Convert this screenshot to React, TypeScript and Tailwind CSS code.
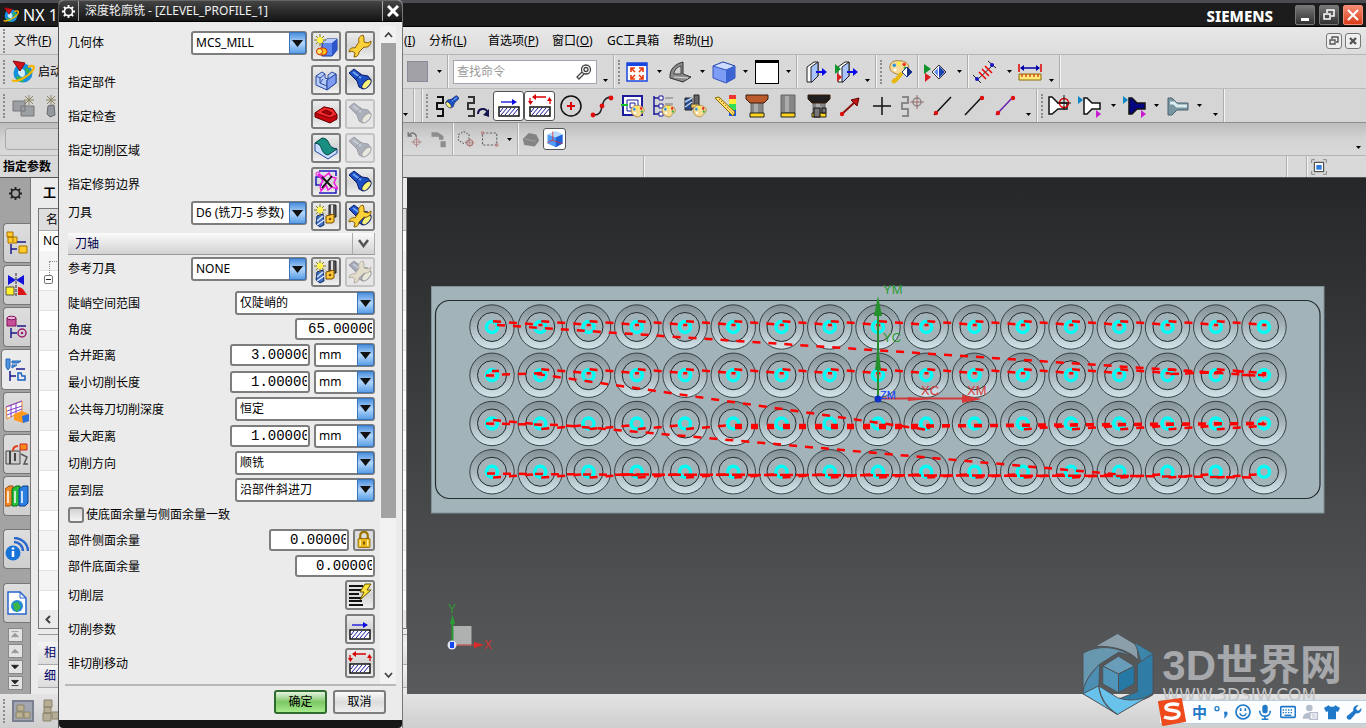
import type { ReactNode } from "react";

type Kids = { children?: ReactNode };

/* ---------- icon primitives ---------- */

function Ico({ children, s = 24 }: Kids & { s?: number }) {
  return (
    <svg width={s} height={s} viewBox="0 0 24 24" fill="none" aria-hidden="true" className="shrink-0">
      {children}
    </svg>
  );
}

const TorchShape = () => (
  <g>
    <path d="M1 5l5-4 8 6 6 1 3 4-8 9-4-2-2-6z" fill="#1c4fc4" stroke="#0a1d66" strokeLinejoin="round" />
    <path d="M5 4l8 6" stroke="#6ea4f5" strokeWidth="2" />
    <path d="M8 11l5-5" stroke="#0a1d66" />
    <ellipse cx="18.500" cy="16" rx="3" ry="6" transform="rotate(42 18.500 16)" fill="#f7f07a" stroke="#0a1d66" />
  </g>
);
const Torch = ({ off }: { off?: boolean }) => (
  <Ico>
    <g opacity={off ? 0.35 : 1} style={off ? { filter: "saturate(.25)" } : undefined}>
      <TorchShape />
    </g>
  </Ico>
);

const WrenchShape = () => (
  <path
    d="M15 1c-4 1-5 4-4 7l-4 6c-3-1-6 1-6 4l3-1 3 2-1 4c3 0 5-2 5-5l5-5c4 1 7-2 7-6l-3 2-4-1 0-4z"
    fill="#fbd23c"
    stroke="#8a5c00"
    strokeLinejoin="round"
  />
);
const SunShape = ({ x = 6, y = 6 }: { x?: number; y?: number }) => (
  <g transform={`translate(${x} ${y})`}>
    <path d="M0-6v12M-6 0h12M-4-4l8 8M4-4l-8 8" stroke="#8f7b00" strokeWidth="1" />
    <circle r="3" fill="#fff44a" />
  </g>
);
const NewGeometry = () => (
  <Ico>
    <path d="M8 9l5-4h10v11l-5 6H8z" fill="#5d87ee" stroke="#17319c" />
    <path d="M8 9l5-4h10l-5 4z" fill="#b9ceff" />
    <path d="M18 9v13l5-6V5z" fill="#2c55c9" />
    <SunShape />
    <rect x="3" y="14" width="10" height="7" rx="3.5" fill="#ffc21a" stroke="#d02c00" />
    <circle cx="5.5" cy="17.5" r="3" fill="#ffe870" stroke="#d02c00" />
  </Ico>
);
const NewTool = () => (
  <Ico>
    <path d="M3 12l6-2 1 11-4 2-4-3z" fill="#3f6fc0" stroke="#142c66" />
    <path d="M3 17l6-5M3 21l7-5" stroke="#dce9ff" strokeWidth="1.500" />
    <path d="M15 1h7v12h-7z" fill="#555" stroke="#222" />
    <path d="M18 1v12" stroke="#ddd" strokeWidth="2" />
    <path d="M12 12l8-2v8l-2 1h-6z" fill="#ffc83a" stroke="#7a4a00" />
    <circle cx="16" cy="15" r="1.300" fill="#7a4a00" />
    <SunShape />
  </Ico>
);
const ToolEdit = ({ off }: { off?: boolean }) => (
  <Ico>
    <g opacity={off ? 0.4 : 1} style={off ? { filter: "saturate(.3)" } : undefined}>
      <TorchShape />
      <WrenchShape />
    </g>
  </Ico>
);
const PartIcon = () => (
  <Ico>
    <path d="M2 8l6-4 3 2v4l3 1V7l4-3 4 2v9l-9 7-11-5z" fill="#b9cbfb" stroke="#2a4a9f" strokeLinejoin="round" />
    <path d="M2 8l4 2 5-4M6 10v5l7 3v-6l9-6M13 18v4M9 11l-3 4" stroke="#2a4a9f" />
    <path d="M13 12l9-6v9l-9 7z" fill="#7f9df0" stroke="#2a4a9f" />
  </Ico>
);
const CheckIcon = () => (
  <Ico>
    <path d="M1 11l9-6 9 2 4 6v4l-7 4L1 15z" fill="#c5060e" stroke="#5c0004" />
    <path d="M1 11l9-6 9 2 4 6-7 3z" fill="#ee2b2b" stroke="#7b0006" />
    <path d="M8 10l4-2 6 3-2 2z" fill="#a60009" stroke="#7b0006" />
  </Ico>
);
const AreaIcon = () => (
  <Ico>
    <path d="M1 7v8l13 8 9-6v-4z" fill="#c8dcff" stroke="#2a4a9f" />
    <path d="M1 7l7-5c9 0 5 11 15 11l-9 6C6 18 9 7 1 7z" fill="#188f80" stroke="#064b43" />
  </Ico>
);
const TrimIcon = () => (
  <Ico>
    <path d="M5 1h17v5M5 23h17v-5M9 7H2v8h6" stroke="#1b1bbd" strokeWidth="1.500" />
    <path d="M4 4l6 3 5-4 2 4 5 1-2 5 4 6-6-2-4 3-2-5-5 6-1-6 3-4z" stroke="#f01ce0" strokeWidth="1.500" />
    <circle cx="4" cy="4" r="2" stroke="#f01ce0" />
    <path d="M8 7l10 10M18 6L8 18" stroke="#111" strokeWidth="1.800" />
  </Ico>
);
const LayersIcon = () => (
  <Ico>
    <path d="M1 3h14M1 7h12M1 11h10M1 15h13M1 18h13M1 22h14" stroke="#111" strokeWidth="2" />
    <path d="M17 1h6l-4 6h4L12 17l4-8h-4z" fill="#ffe23a" stroke="#6b5500" />
  </Ico>
);
const HatchShape = () => (
  <g>
    <path d="M2 13h20v9H2z" fill="#fff" stroke="#111" strokeWidth="1.5" />
    <path d="M4 21l6-7M8 21l6-7M12 21l6-7M16 21l5-6M3 18l3-4" stroke="#1b1b9c" />
  </g>
);
const CutParam = () => (
  <Ico>
    <path d="M4 8h14" stroke="#0a0ae0" strokeWidth="1.3" />
    <path d="M15 5l5 3-5 3z" fill="#0a0ae0" />
    <HatchShape />
  </Ico>
);
const NonCut = () => (
  <Ico>
    <path d="M5 3h13M2 4v5M22 10V5" stroke="#d80000" strokeWidth="1.3" />
    <path d="M8 0v6L4 3zM0 7h5l-2.500 4zM19 7h5l-2.500-4z" fill="#d80000" />
    <HatchShape />
  </Ico>
);
const Lock = () => (
  <Ico s={18}>
    <path d="M7 11V6a5 5 0 0110 0v5" stroke="#9c7400" strokeWidth="3" />
    <rect x="4" y="10" width="16" height="12" rx="1" fill="#e9b31c" stroke="#7e5b00" />
    <path d="M7 12v8M17 12v8" stroke="#fff09b" strokeWidth="2" />
    <path d="M12 14v4" stroke="#5c4200" strokeWidth="2" />
  </Ico>
);
const PaletteShape = ({ t = "" }: { t?: string }) => (
  <g transform={t}>
    <path d="M2 9c0-5 5-8 11-7 6 0 10 3 10 7 0 3-4 3-5 5s-3 4-7 3-9-3-9-8z" fill="#f8dc96" stroke="#a0752c" />
    <circle cx="7" cy="7" r="1.900" fill="#2693e6" />
    <circle cx="12" cy="5" r="1.900" fill="#fff12b" />
    <circle cx="18" cy="6" r="1.900" fill="#e82c23" />
    <circle cx="19" cy="10" r="1.700" fill="#32b13c" />
    <circle cx="8" cy="12" r="1.700" fill="#fff" />
  </g>
);
const smallPalette = "translate(9 10) scale(.62 .75)";
const Globe = ({ s = 24 }: { s?: number }) => (
  <Ico s={s}>
    <circle cx="12" cy="13" r="9.500" fill="#1490e0" />
    <path d="M5 17c3-2 6 1 8 5-4 0-7-2-8-5zM14 8c4 0 6 3 6 6-4 0-6-3-6-6z" fill="#35b34b" />
    <path d="M8 10c3-2 6-1 6 3s-3 5-5 3-3-4-1-6z" fill="#cceefc" />
    <path d="M1 20c5 4 22-7 22-13-1-2-4-1-6 0" stroke="#f4b600" strokeWidth="2.200" />
    <path d="M2 1l12 2-5 8z" fill="#d6121b" stroke="#880a10" />
  </Ico>
);
const Cube = ({ s = 24 }: { s?: number }) => (
  <Ico s={s}>
    <path d="M1 6l10-4 12 4v12l-9 5-13-5z" fill="#7d9cf5" stroke="#3655b8" />
    <path d="M1 6l10-4 12 4-9 4z" fill="#cddbff" stroke="#3655b8" />
    <path d="M14 10l9-4v12l-9 5z" fill="#3c63d2" />
  </Ico>
);
const Book = ({ tri }: { tri?: boolean }) => (
  <Ico>
    <path d="M3 7l7-5h4v14l-6 6H3z" fill="#fff" stroke="#222" />
    <path d="M7 7l7-5v14l-6 6H7z" fill="#a9c4ff" stroke="#222" />
    <path d="M12 12h8" stroke="#0a0ae8" strokeWidth="2" />
    <path d="M18 8l5 4-5 4z" fill="#0a0ae8" />
    {tri && <path d="M0 4l6 5-6 5z" fill="#12952f" />}
    {tri && <path d="M2 13l5 4-5 5z" fill="#d81e1e" />}
  </Ico>
);
const Coil = () => <path d="M2 3h6v6H2v6h6v7H2" strokeWidth="2" />;
const ToolHead = ({ top, mid }: { top?: string; mid?: boolean }) => (
  <Ico>
    <path d={top ? "M6 6h12v14H6z" : "M5 1h14v18H5z"} fill="#868686" stroke="#666" />
    <path d={top ? "M11 9v10" : "M11 2v16"} stroke="#ababab" strokeWidth="4" />
    {top && <path d="M1 1h22v4l-4 4H5L1 5z" fill={top} stroke="#3a1c0a" />}
    <path d="M5 19h14v4H5z" fill="#ffd51c" stroke="#222" />
    {mid && <path d="M7 14h6v9H7zM15 14h4v5h-4z" fill="#777" stroke="#111" />}
  </Ico>
);
const Pin = ({ a, b, c = "#111" }: { a?: boolean; b?: boolean; c?: string }) => (
  <Ico>
    <path d="M3 21L20 3" stroke={c} strokeWidth="1.500" />
    {a && <circle cx="5" cy="19" r="2.200" fill="#e00d0d" />}
    {b && <circle cx="20" cy="4" r="2.200" fill="#e00d0d" />}
  </Ico>
);
const Funnel = ({ fill, steel, marks }: { fill: string; steel?: boolean; marks?: boolean }) => (
  <Ico>
    {steel ? (
      <g>
        <path d="M2 4h4l5 5h11v7H11l-5 5H2z" fill="#7896a2" stroke="#4d6570" />
        <path d="M4 9h4l3 3h10" stroke="#dcecf1" strokeWidth="3" />
      </g>
    ) : (
      <path d="M6 4h3l5 5h8v6h-8l-5 5H6z" fill={fill} stroke="#111" strokeWidth="1.500" />
    )}
    {marks && <path d="M0 2l5 4-5 4z" fill="#0c86c4" />}
    {marks && <path d="M18 16l5 4-5 4z" fill="#c81ed0" />}
  </Ico>
);

function Gear({ s = 16, c = "#fff" }: { s?: number; c?: string }) {
  return (
    <svg width={s} height={s} viewBox="0 0 16 16" fill="none" stroke={c} aria-hidden="true">
      <circle cx="8" cy="8" r="5" strokeWidth="2" />
      <path d="M8 0v3M8 13v3M0 8h3M13 8h3M2.300 2.300l2 2M11.700 11.700l2 2M13.700 2.300l-2 2M2.300 13.700l2-2" strokeWidth="2.200" />
    </svg>
  );
}

/* ---------- tool bar parts ---------- */

const Grip = () => (
  <span aria-hidden="true" className="mx-[3px] h-6 w-0 shrink-0 border-l-2 border-dotted border-[#8c8c8c]" />
);
const Sep = () => <span aria-hidden="true" className="h-full w-[2px] shrink-0 border-l border-[#adadad] bg-[#f4f4f4]" />;
const Caret = ({ low }: { low?: boolean }) => (
  <button aria-label="更多" className={low ? "flex h-6 w-4 shrink-0 items-end justify-center pb-[2px]" : "flex h-6 w-4 shrink-0 items-center justify-center"}>
    <svg width="5" height="3" viewBox="0 0 5 3" aria-hidden="true">
      <path d="M0 0h5L2.500 3z" fill="#000" />
    </svg>
  </button>
);
const Tool = ({ children, label, on, w = "w-[31px]" }: Kids & { label: string; on?: boolean; w?: string }) => (
  <button
    aria-label={label}
    className={`flex h-[30px] shrink-0 items-center justify-center ${w} ${on ? "rounded-[3px] border border-[#555] bg-white" : ""}`}
  >
    {children}
  </button>
);

const menus = [
  { t: "分析", k: "L", w: "w-[59px]" },
  { t: "首选项", k: "P", w: "w-[64px]" },
  { t: "窗口", k: "O", w: "w-[55px]" },
  { t: "GC工具箱", k: "", w: "w-[66px]" },
  { t: "帮助", k: "H", w: "w-[60px]" },
];
const MenuText = ({ t, k }: { t: string; k: string }) => (
  <>
    {t}
    {k && (
      <>
        (<u>{k}</u>)
      </>
    )}
  </>
);

function TitleBar() {
  return (
    <header className="flex h-[27px] shrink-0 items-center border-t-3 border-b border-t-[#4b4d53] border-b-black bg-[#1c1c1c] text-white">
      <span className="ml-[3px]">
        <Globe s={16} />
      </span>
      <span className="ml-1 text-[16px]">NX 1</span>
      <span className="mr-[22px] ml-auto pt-[2px] font-['Noto_Sans',sans-serif] text-[15px] font-extrabold">SIEMENS</span>
      <div className="mr-[3px] flex gap-1">
        <button aria-label="最小化" className="flex h-5 w-5 items-end justify-center rounded-[2px] border border-[#777] bg-linear-to-b from-[#777] to-[#333] pb-[3px]">
          <span className="h-[3px] w-2 bg-white" />
        </button>
        <button aria-label="还原" className="flex h-5 w-5 items-center justify-center rounded-[2px] border border-[#777] bg-linear-to-b from-[#777] to-[#333]">
          <svg width="12" height="12" viewBox="0 0 12 12" fill="none" stroke="#fff" strokeWidth="1.500">
            <path d="M1 5h6v5H1zM4 4V1h7v6H8" />
          </svg>
        </button>
        <button aria-label="关闭" className="flex h-5 w-5 items-center justify-center rounded-[2px] border border-[#f0907a] bg-linear-to-b from-[#f38a72] to-[#d93a12]">
          <svg width="12" height="12" viewBox="0 0 12 12" stroke="#fff" strokeWidth="2">
            <path d="M1 1l10 10M11 1L1 11" />
          </svg>
        </button>
      </div>
    </header>
  );
}

function MenuBar() {
  return (
    <nav className="flex h-[28px] shrink-0 items-center border-b border-[#b5b5b5] bg-linear-to-b from-[#e8e8e8] to-[#dcdcdc]">
      <div className="flex w-[404px] shrink-0 items-center">
        <Grip />
        <button className="ml-[6px] whitespace-nowrap">
          <MenuText t="文件" k="F" />
        </button>
      </div>
      <button className="w-[25px] overflow-hidden text-left whitespace-nowrap">
        (<u>I</u>)
      </button>
      {menus.map((m) => (
        <button key={m.t} className={`shrink-0 text-left whitespace-nowrap ${m.w}`}>
          <MenuText t={m.t} k={m.k} />
        </button>
      ))}
      <div className="mr-[5px] ml-auto flex gap-[3px]">
        <button aria-label="还原窗口" className="flex h-4 w-4 items-center justify-center rounded-[3px] border border-[#777] bg-[#efefef]">
          <svg width="10" height="10" viewBox="0 0 10 10" fill="none" stroke="#555" strokeWidth="1.400">
            <path d="M1 4h5v4H1zM3 3V1h6v5H7" />
          </svg>
        </button>
        <button aria-label="关闭窗口" className="flex h-4 w-4 items-center justify-center rounded-[3px] border border-[#777] bg-[#efefef]">
          <svg width="8" height="8" viewBox="0 0 8 8" stroke="#555" strokeWidth="2.400">
            <path d="M1 1l6 6M7 1L1 7" />
          </svg>
        </button>
      </div>
    </nav>
  );
}

function StandardBar() {
  return (
    <div className="flex h-[34px] shrink-0 items-center border-b border-[#bcbcbc] bg-[#d9d9d9]">
      <div className="flex w-[403px] shrink-0 items-center">
        <Grip />
        <button className="ml-[3px] flex items-center gap-[3px] whitespace-nowrap">
          <Globe /> 启动
        </button>
      </div>
      <Tool label="颜色" w="w-[28px]">
        <span className="h-[21px] w-[21px] border border-[#8a8a9c] bg-[#a2a2a6]" />
      </Tool>
      <Caret />
      <Sep />
      <label className="ml-1 flex h-6 w-[144px] shrink-0 items-center border border-[#a5a5b0] bg-white pr-1 pl-[3px]">
        <input aria-label="查找命令" placeholder="查找命令" className="w-full min-w-0 outline-none placeholder:text-[#9a9a9a]" />
        <svg width="16" height="16" viewBox="0 0 16 16" fill="none" stroke="#444" strokeWidth="1.300" className="shrink-0">
          <circle cx="10" cy="5.500" r="4.500" />
          <circle cx="10" cy="5.500" r="2" />
          <path d="M6 8l-5 5 2 2 5-5" />
        </svg>
      </label>
      <Caret low />
      <Sep />
      <Grip />
      <Tool label="适合窗口" w="w-[28px]">
        <Ico>
          <path d="M2 3h20v18H2z" fill="#fff" stroke="#1746e0" strokeWidth="1.500" />
          <path d="M2 3h20v3H2z" fill="#1746e0" />
          <path d="M6 12V8h4M18 12V8h-4M6 15v4h4M18 15v4h-4M6 8l4 4M18 8l-4 4M6 19l4-4M18 19l-4-4" stroke="#e8380c" strokeWidth="1.600" />
        </Ico>
      </Tool>
      <Caret />
      <Tool label="截面" w="w-[27px]">
        <Ico>
          <path d="M1 16c0-7 5-12 13-14v12l8 3-8 5-13-4z" fill="#8a8a8a" stroke="#333" />
          <path d="M5 14c0-4 3-7 7-8v8z" fill="#d0d0d0" stroke="#444" />
          <path d="M5 17l14 1" stroke="#ddd" />
        </Ico>
      </Tool>
      <Caret />
      <Tool label="着色" w="w-[27px]">
        <Cube />
      </Tool>
      <Caret />
      <Tool label="背景" w="w-[27px]">
        <span className="h-6 w-6 shrink-0 border border-t-3 border-black bg-white" />
      </Tool>
      <Caret />
      <Sep />
      <Tool label="移出图层" w="w-[36px]">
        <Book />
      </Tool>
      <Tool label="移动图层" w="w-[25px]">
        <Book tri />
      </Tool>
      <Caret low />
      <Sep />
      <Grip />
      <Tool label="编辑对象显示" w="w-[32px]">
        <Ico>
          <PaletteShape t="translate(-1 -1) scale(.9)" />
          <path d="M13 13l-7 8M6 19l-2 4" stroke="#e8b80c" strokeWidth="4" />
          <path d="M13 12l5-5 5 5-5 5z" fill="#fff" stroke="#173b9b" />
          <path d="M18 7l5 5-5 5z" fill="#16307f" />
        </Ico>
      </Tool>
      <Sep />
      <Tool label="显示隐藏" w="w-[32px]">
        <Ico>
          <path d="M1 4l7 5-7 5z" fill="#12952f" />
          <path d="M2 13l6 4-6 5z" fill="#d81e1e" />
          <path d="M9 12l7-7 7 7-7 7z" fill="#fff" stroke="#333" />
          <path d="M16 6l6 6-6 6z" fill="#1a3fae" />
          <path d="M15 8v8l-4-4z" fill="#5f8be8" />
        </Ico>
      </Tool>
      <Caret />
      <Sep />
      <Tool label="测量" w="w-[32px]">
        <Ico>
          <path d="M4 20L20 5M15 1l8 7M0 15l8 8" stroke="#222" />
          <path d="M6 12l7 7M9 9l7 7M12 6l7 7" stroke="#e00" strokeWidth="1.500" />
          <circle cx="4" cy="19" r="2" fill="#1515c8" />
          <circle cx="19" cy="5" r="2" fill="#1515c8" />
        </Ico>
      </Tool>
      <Caret />
      <Tool label="尺寸" w="w-[26px]">
        <Ico>
          <path d="M1 4v8M23 4v8" stroke="#d00" strokeWidth="1.500" />
          <path d="M3 8h18" stroke="#00a" strokeWidth="1.500" />
          <path d="M2 8l4-3v6zM22 8l-4-3v6z" fill="#00a" />
          <path d="M1 14h22v6H1z" fill="#ffe97a" stroke="#8a6a00" />
          <path d="M4 14v3M8 14v3M12 14v3M16 14v3M20 14v3" stroke="#c00" />
        </Ico>
      </Tool>
      <Caret low />
      <Sep />
    </div>
  );
}

const GrayBlocks = () => (
  <Ico>
    <path d="M1 7h12v10H1zM9 12h13v10H9z" fill="#9b9ea3" stroke="#777" />
    <path d="M17 1v10M12 6h10M13 2l8 8M21 2l-8 8" stroke="#8a8560" />
  </Ico>
);
const GrayTool = () => (
  <Ico>
    <path d="M5 12l6-1 1 10-5 2-3-3z" fill="#93979e" stroke="#6a6a6a" />
    <path d="M17 2h6v12h-6z" fill="#999" stroke="#777" />
    <path d="M8 1v10M3 6h10M4 2l8 8M12 2l-8 8" stroke="#8a8560" />
  </Ico>
);

function CamBar() {
  return (
    <div className="flex h-[34px] shrink-0 items-center border-b border-[#8f8f8f] bg-[#d5d5d5]">
      <div className="flex w-[397px] shrink-0 items-center">
        <Grip />
        <Tool label="创建程序">
          <GrayBlocks />
        </Tool>
        <Tool label="创建刀具">
          <GrayTool />
        </Tool>
      </div>
      <Caret low />
      <Sep />
      <span className="w-[6px] shrink-0" />
      <Sep />
      <Grip />
      <Tool label="校验">
        <Ico>
          <g stroke="#111">
            <Coil />
          </g>
          <g transform="translate(25 1) scale(-.62 .62)">
            <TorchShape />
          </g>
        </Ico>
      </Tool>
      <Tool label="重播">
        <Ico>
          <g stroke="#333">
            <Coil />
          </g>
          <path d="M12 20c0-6 8-7 10-1" stroke="#151550" strokeWidth="2" />
          <path d="M23 15v8l-6-2z" fill="#151550" />
        </Ico>
      </Tool>
      <Tool label="切削参数" on>
        <CutParam />
      </Tool>
      <Tool label="非切削移动" on>
        <NonCut />
      </Tool>
      <Tool label="圆心">
        <Ico>
          <circle cx="12" cy="12" r="10" stroke="#111" strokeWidth="1.500" />
          <path d="M12 8v8M8 12h8" stroke="#d00" strokeWidth="2" />
        </Ico>
      </Tool>
      <Tool label="样条">
        <Ico>
          <path d="M3 21c14 1 4-17 18-18" stroke="#222" strokeWidth="1.500" />
          <circle cx="3" cy="21" r="2.400" fill="#e00d0d" />
          <circle cx="12" cy="12" r="2.400" fill="#e00d0d" />
          <circle cx="21" cy="4" r="2.400" fill="#e00d0d" />
        </Ico>
      </Tool>
      <Tool label="轨迹显示">
        <Ico>
          <path d="M2 2h19v19H2z" fill="#fff" stroke="#1b1b9c" strokeWidth="2" />
          <path d="M6 6h11v11H6zM9 9h5v5H9z" stroke="#1b1b9c" />
          <path d="M0 11h7" stroke="#16c22b" strokeWidth="2" />
          <PaletteShape t={smallPalette} />
        </Ico>
      </Tool>
      <Tool label="操作显示">
        <Ico>
          <path d="M2 2v19M2 4h5M2 12h5M2 20h5" stroke="#1b1b9c" strokeWidth="1.500" />
          <path d="M7 2h4v4H7zM7 10h4v4H7zM7 18h4v4H7z" fill="#fff" stroke="#1b1b9c" />
          <path d="M13 4h8M13 10h8" stroke="#777" />
          <PaletteShape t={smallPalette} />
        </Ico>
      </Tool>
      <Tool label="刀具显示">
        <Ico>
          <path d="M2 4h7v12H2z" fill="#274c8c" stroke="#222" />
          <path d="M2 8l7-4M2 13l7-5" stroke="#bcd2f2" strokeWidth="1.500" />
          <path d="M11 1h5v10h-5z" fill="#666" stroke="#222" />
          <path d="M8 10h8v4H8z" fill="#e8c55a" stroke="#444" />
          <PaletteShape t={smallPalette} />
        </Ico>
      </Tool>
      <Tool label="颜色标尺">
        <Ico>
          <path d="M15 1h7v5h-7z" fill="#e33" />
          <path d="M15 5h7v5h-7z" fill="#fe3" />
          <path d="M15 10h7v6h-7z" fill="#3d5" />
          <path d="M15 16h7v6h-7z" fill="#15e" />
          <path d="M1 4l4-1 16 15-2 4z" fill="#ffe26a" stroke="#8a6a00" />
          <path d="M5 5l14 14" stroke="#c00" strokeDasharray="1 2" />
        </Ico>
      </Tool>
      <Tool label="铣刀">
        <ToolHead top="#bb5a2b" />
      </Tool>
      <Tool label="刀柄">
        <ToolHead />
      </Tool>
      <Tool label="夹持器">
        <ToolHead top="#1f1f1f" mid />
      </Tool>
      <Tool label="矢量">
        <Ico>
          <path d="M4 20L18 7" stroke="#8a1010" strokeWidth="2" />
          <path d="M21 4l-2 8-6-6z" fill="#c01616" stroke="#600" />
          <circle cx="4" cy="20" r="2.200" fill="#e00d0d" />
        </Ico>
      </Tool>
      <Tool label="点">
        <Ico>
          <path d="M13 3v18M4 12h18" stroke="#111" strokeWidth="1.500" />
        </Ico>
      </Tool>
      <Tool label="轨迹点">
        <Ico>
          <g stroke="#888">
            <Coil />
            <circle cx="17" cy="8" r="4" strokeWidth="1.500" />
            <path d="M17 1v14M10 8h14" stroke="#a06a6a" />
          </g>
        </Ico>
      </Tool>
      <Tool label="线段一">
        <Pin a />
      </Tool>
      <Tool label="线段二">
        <Pin b />
      </Tool>
      <Tool label="线段三">
        <Pin a b c="#6a1fb0" />
      </Tool>
      <Caret low />
      <Sep />
      <Grip />
      <Tool label="夹具设置" w="w-[28px]">
        <Ico>
          <path d="M1 3h3l6 6h9v6h-9l-6 5H1z" fill="#fff" stroke="#111" strokeWidth="1.500" />
          <circle cx="16" cy="9" r="4.500" stroke="#d00" strokeWidth="1.500" />
          <path d="M16 1v15M9 9h14" stroke="#111" />
        </Ico>
      </Tool>
      <Tool label="部件" w="w-[31px]">
        <Funnel fill="#fff" marks />
      </Tool>
      <Caret />
      <Tool label="毛坯" w="w-[27px]">
        <Funnel fill="#050580" marks />
      </Tool>
      <Caret />
      <Tool label="工件" w="w-[27px]">
        <Funnel fill="#fff" steel />
      </Tool>
      <Caret />
      <Caret low />
      <Sep />
    </div>
  );
}

function SelectionBar() {
  return (
    <div className="flex h-[33px] shrink-0 items-center border-b border-[#b5b5b5] bg-linear-to-b from-[#bdbdbd] via-[#d3d3d3] to-[#d9d9d9]">
      <div className="w-[403px] shrink-0 pl-[5px]">
        <input aria-label="类型过滤器" disabled className="h-[22px] w-[200px] rounded-[3px] border border-[#aaa] bg-[#d5d5d5]" />
      </div>
      <Tool label="撤消捕捉" w="w-[23px]">
        <Ico s={18}>
          <path d="M3 3v5h5M4 7c4-5 9-3 10 2" stroke="#777" strokeWidth="2" />
          <circle cx="14" cy="16" r="4" stroke="#a77" />
          <path d="M14 9v14M7 16h14" stroke="#a77" />
        </Ico>
      </Tool>
      <Tool label="重复" w="w-[26px]">
        <Ico s={18}>
          <path d="M2 3h8l8 5v5h-6V9H2zM14 15h7v8h-7z" fill="#8d8d8d" />
        </Ico>
      </Tool>
      <Sep />
      <Tool label="选择体" w="w-[24px]">
        <Ico s={18}>
          <path d="M2 6l7-4 7 4v8l-7 4-7-4z" stroke="#666" strokeDasharray="2 2" strokeWidth="1.500" />
          <circle cx="17" cy="17" r="4" stroke="#a77" strokeWidth="1.500" />
          <path d="M17 11v12M11 17h12" stroke="#a77" />
        </Ico>
      </Tool>
      <Tool label="矩形选择" w="w-[23px]">
        <Ico s={18}>
          <path d="M2 4h19v16H2z" stroke="#666" strokeDasharray="3 2" strokeWidth="1.500" />
          <path d="M0 2h4v4H0zM19 18h4v4h-4z" fill="#b88" />
        </Ico>
      </Tool>
      <Caret />
      <Sep />
      <Tool label="面" w="w-[24px]">
        <Ico s={18}>
          <path d="M1 12l8-8 10 2 4 8-6 8-14-2z" fill="#838383" />
          <path d="M4 12l14 3" stroke="#aaa" />
        </Ico>
      </Tool>
      <button aria-label="实体" className="flex h-[22px] w-[23px] shrink-0 items-center justify-center rounded-[3px] border border-[#555] bg-white">
        <Ico s={18}>
          <path d="M2 6l11-4 9 4v12l-9 5-11-5z" fill="#4f9cf5" />
          <path d="M2 6l11-4 9 4-9 4z" fill="#b8dcff" />
          <path d="M13 10l9-4v12l-9 5z" fill="#1f62d8" />
          <path d="M9 2v12l13 4M2 17l7-4" stroke="#e22" />
        </Ico>
      </button>
      <span className="ml-auto">
        <Caret low />
      </span>
    </div>
  );
}

function PromptBar() {
  return (
    <div className="flex h-[22px] shrink-0 items-center border-b border-[#555] bg-[#d9d9d9]">
      <span className="w-[643px] shrink-0 pl-[3px] font-bold whitespace-nowrap">指定参数</span>
      <Sep />
      <span className="flex-1" />
      <Sep />
      <span className="w-[18px]" />
      <Sep />
      <button aria-label="全屏" className="mr-[39px] ml-[3px] flex h-4 w-4 items-center justify-center">
        <Ico s={16}>
          <path d="M1 6V1h5M18 1h5v5M1 18v5h5M23 18v5h-5" stroke="#888" strokeWidth="1.500" />
          <path d="M5 5h14v14H5z" fill="#fff" stroke="#333" strokeWidth="1.500" />
          <path d="M8 9h8v7H8z" fill="#2f7bdc" />
        </Ico>
      </button>
    </div>
  );
}

/* ---------- left side ---------- */

const Tree = () => <path d="M6 13v10M6 18h6M12 11h9" stroke="#1b1b8c" strokeWidth="1.500" />;

const resources: { label: string; on?: boolean; icon: ReactNode }[] = [
  {
    label: "装配导航器",
    icon: (
      <>
        <path d="M2 1h6v5H2zM3 6h9v6H3zM14 15h8v7h-8z" fill="#ffca2a" stroke="#a77200" />
        <path d="M8 6v5" stroke="#a77200" />
        <Tree />
      </>
    ),
  },
  {
    label: "约束导航器",
    icon: (
      <>
        <path d="M3 2l8 5-8 5zM19 2l-8 5 8 5z" fill="#1212d8" />
        <path d="M11 0v23" stroke="#222" strokeDasharray="3 1" />
        <path d="M1 14h8v8H1z" fill="#fff22a" stroke="#554" />
        <path d="M13 14c5 0 6 4 9 8h-9z" fill="#d81414" />
      </>
    ),
  },
  {
    label: "部件导航器",
    icon: (
      <>
        <path d="M2 3h9v8H2z" fill="#c8509a" stroke="#7c1459" />
        <ellipse cx="6.500" cy="3" rx="4.500" ry="1.800" fill="#f0b0d8" stroke="#7c1459" />
        <Tree />
        <circle cx="17" cy="18" r="4" stroke="#9c1a70" strokeWidth="1.500" />
        <circle cx="17" cy="18" r="1.300" fill="#9c1a70" />
      </>
    ),
  },
  {
    label: "工序导航器",
    on: true,
    icon: (
      <>
        <path d="M2 1h4v8l-2 3-2-3zM8 3h9l-3 2H8zM8 7h5l-5 3z" fill="#4f94e0" stroke="#2768b8" />
        <Tree />
        <path d="M14 15h3l1 3h3v4h-7z" stroke="#1e5fc0" strokeWidth="1.500" />
      </>
    ),
  },
  {
    label: "机床导航器",
    icon: (
      <>
        <path d="M1 7l16-6v10L2 19z" fill="#fff" stroke="#e8862c" />
        <path d="M1 7l16-6M2 11l15-5M2 15l15-6M6 5v12M11 3v12" stroke="#7f3fcf" />
        <path d="M9 14l8-3 7 3v7l-6 2-9-3z" fill="#ff9a1f" />
        <path d="M17 16l7-2v7l-6 2z" fill="#2672e0" />
      </>
    ),
  },
  {
    label: "加工向导",
    icon: (
      <>
        <path d="M1 9h14v13H1z" fill="#ccc" stroke="#444" />
        <path d="M5 9v13M10 11v8" stroke="#444" strokeWidth="2" />
        <path d="M16 12l6 3-3 7h4" stroke="#555" strokeWidth="1.500" />
        <path d="M15 2h7v6h-7z" fill="#ff8a1a" stroke="#c22" />
        <path d="M13 4C9 4 8 6 8 9" stroke="#e33a12" strokeWidth="2" />
      </>
    ),
  },
  {
    label: "重用库",
    icon: (
      <>
        <path d="M0 5l4-3h4v17l-3 3H0z" fill="#f08a28" stroke="#9a4a08" />
        <path d="M7 5l4-3h4v17l-3 3H7z" fill="#27c03c" stroke="#0c6a1a" />
        <path d="M14 5l4-3h5v17l-3 3h-6z" fill="#2a7fe0" stroke="#0e3f8a" />
        <path d="M3 7v12M10 7v12M17 7v12" stroke="#fff" strokeWidth="1.500" />
      </>
    ),
  },
];

const InfoIcon = () => (
  <Ico>
    <path d="M9 5c5 0 9 4 9 9M9 1c8 0 14 6 14 13" stroke="#2a66cc" strokeWidth="2.500" />
    <circle cx="8" cy="16" r="7.500" fill="#1773d8" />
    <path d="M8 14v6M8 10.500v2" stroke="#fff" strokeWidth="2.500" />
  </Ico>
);

const tabClass =
  "flex h-10 w-[27px] shrink-0 items-center justify-center self-end rounded-l-[4px] border border-r-0 border-[#777] bg-linear-to-b from-[#dedede] to-[#cfcfcf]";
const activeTabClass =
  "flex h-[41px] w-[29px] shrink-0 items-center justify-center self-end rounded-l-[4px] border border-r-0 border-[#777] bg-[#ebebeb]";

function ResourceBar() {
  return (
    <aside className="flex w-[31px] shrink-0 flex-col items-center border-r border-[#777] bg-[#a3a3a3]">
      <button aria-label="设置" className="mt-2 mb-[23px] flex h-[14px] items-center">
        <Gear s={13} c="#222" />
      </button>
      <div className="flex w-full flex-col gap-[2px]">
        {resources.map((r) => (
          <button key={r.label} aria-label={r.label} className={r.on ? activeTabClass : tabClass}>
            <Ico>{r.icon}</Ico>
          </button>
        ))}
      </div>
      <button aria-label="信息" className={`mt-[13px] ${tabClass}`}>
        <InfoIcon />
      </button>
      <button aria-label="网页" className={`mt-[14px] ${tabClass}`}>
        <Ico>
          <path d="M3 1h12l6 6v16H3z" fill="#fff" stroke="#2a66cc" strokeWidth="1.500" />
          <path d="M15 1v6h6" stroke="#2a66cc" />
          <circle cx="12" cy="15" r="6" fill="#2288d8" />
          <path d="M8 12l5-1 3 5-4 5-3-3z" fill="#39b54a" />
        </Ico>
      </button>
      <div className="mt-[5px] flex flex-col gap-[2px]">
        {["M3 3h8M7 5l4 4H3z", "M7 5l4 4H3z", "M3 5h8l-4 4z", "M3 4h8l-4 4zM3 10h8"].map((d, i) => (
          <button key={d} aria-label={`滚动 ${i + 1}`} className="flex h-[14px] w-[15px] items-center justify-center border border-[#888] bg-[#e2e2e2]">
            <svg width="12" height="12" viewBox="0 0 14 14">
              <path d={d} fill={i < 2 ? "#999" : "#222"} stroke={i < 2 ? "#999" : "#222"} />
            </svg>
          </button>
        ))}
      </div>
    </aside>
  );
}

function Navigator() {
  return (
    <section className="flex w-[376px] shrink-0 flex-col bg-[#ebebeb] pl-[7px]">
      <h2 className="h-[30px] w-5 overflow-hidden pt-[6px] pl-[5px] text-[13px] font-bold whitespace-nowrap">工</h2>
      <div className="flex flex-1 flex-col border border-[#777] bg-white">
        <div className="flex h-[22px] items-center border-b border-[#aaa] bg-[#dedede] pl-[7px]">名</div>
        <div className="flex h-5 items-center pl-[4px]">NC</div>
        <div className="flex-1 bg-[repeating-linear-gradient(#f4f4f4_0_19px,#e2e2e2_19px_20px,#fff_20px_39px,#e2e2e2_39px_40px)] pt-[10px] pl-[5px]">
          <div className="ml-[5px] h-[14px] w-3 border-t border-l border-dotted border-[#888]" />
          <span className="flex h-[9px] w-[9px] items-center justify-center rounded-[2px] border border-[#777] bg-white">
            <span className="h-px w-[5px] bg-[#222]" />
          </span>
        </div>
        <div className="flex h-[18px] items-center bg-[#ebebeb] pl-[6px]">
          <svg width="6" height="9" viewBox="0 0 6 9" fill="none" stroke="#444" strokeWidth="2">
            <path d="M5 1L1.500 4.500 5 8" />
          </svg>
        </div>
      </div>
      <div className="mt-[5px] border-t border-[#999] pt-[7px] pb-[6px] text-[#000066]">
        <div className="h-[23px] border-b border-[#aaa] bg-linear-to-b from-[#f4f4f4] to-[#dcdcdc] pt-[3px] pl-[6px]">相</div>
        <div className="h-[23px] border-b border-[#aaa] bg-linear-to-b from-[#f4f4f4] to-[#dcdcdc] pt-[3px] pl-[6px]">细</div>
      </div>
    </section>
  );
}

/* ---------- graphics window ---------- */

const X0 = 492;
const PITCH = 48.25;
const cols = Array.from({ length: 17 }, (_, i) => X0 + i * PITCH);
const rowsY = [327, 375.25, 423.5, 471.75];

function Viewport() {
  return (
    <main className="min-w-0 flex-1 bg-linear-to-b from-[#262729] via-[#48494b] via-65% to-[#595a5c]">
      <svg className="h-full w-full font-['Liberation_Sans',sans-serif]" viewBox="407 178 959 516" preserveAspectRatio="xMinYMin meet">
        <defs>
          <linearGradient id="bore" x1="0" y1="0" x2="0" y2="1">
            <stop offset="0" stopColor="#839297" />
            <stop offset=".45" stopColor="#a3b3b9" />
            <stop offset="1" stopColor="#d3e5eb" />
          </linearGradient>
        </defs>
        <rect x="431.500" y="286.500" width="892.500" height="226.500" fill="#a2b4ba" stroke="#7f9096" />
        <rect x="435.500" y="300.500" width="884.500" height="198" rx="14" fill="none" stroke="#252b2d" strokeWidth="1.200" />
        {rowsY.map((y) =>
          cols.map((x) => (
            <g key={`${x}-${y}`}>
              <circle cx={x} cy={y} r="22.200" fill="url(#bore)" stroke="#2c3335" strokeWidth=".9" />
              <circle cx={x} cy={y} r="14.500" fill="#a2b4ba" stroke="#22282a" strokeWidth="1" />
              <circle cx={x} cy={y} r="5.500" fill="none" stroke="#00fdf6" strokeWidth="3.400" />
            </g>
          )),
        )}
        <g stroke="#f00" strokeWidth="2.500" fill="none">
          {cols.slice(0, 16).map((x, i) => (
            <g key={x} strokeDasharray="8 8">
              <path d={`M${x + 1} 321.300L${x + 46} 324.500`} />
              <path d={`M${x + 46.500} 325h4`} strokeDasharray="none" />
              {i > 0 ? (
                <path d={`M${x + 1} 369.300L${x + 46} 372.800M${x + 46.500} 373.300h4`} />
              ) : (
                <path d="M492 371h7M486 375.500h8M502 374.500L545 373" />
              )}
              {i < 5 && <path d={`M${x + 1} ${i ? 429 : 420}L${x + 48} ${i ? 425 : 424.500}`} />}
              {i > 10 && <path d={`M${x + 1} 429.200L${x + 46} 426`} />}
              <path d={`M${x + 1} 477.500L${x + 46} 474`} />
            </g>
          ))}
          <g strokeDasharray="8 8">
            <path d="M497 325L1264 376" />
            <path d="M537 374L929 430" />
            <path d="M486 423.500L560 425L1125 475" />
            <path d="M735 426.500H930" strokeWidth="5.500" strokeDasharray="7 9" />
            <path d="M926 426L1264 423.500" strokeWidth="3.600" />
            <path d="M1242 375h26M1258 424h12" />
          </g>
          <path d="M487 473.500L640 475" strokeDasharray="8 8" />
          <path d="M620 474.500L1130 476" strokeDasharray="13 3" />
          <path d="M1130 476L1256 477.500" strokeDasharray="9 7" />
          <path d="M1170 374L1222 372M1236 371.500h8" strokeDasharray="9 6" />
        </g>
        <path d="M878 399V300" stroke="#23902b" strokeWidth="2" />
        <path d="M878 296l-4 20h8zM878 344l-3 26h6z" fill="#23902b" />
        <path d="M878 398.500H965" stroke="#cf3a3a" strokeWidth="2" />
        <path d="M982 399l-20-4v8zM930 399l-22-2v4z" fill="#d93636" />
        <circle cx="878" cy="399" r="3.500" fill="#0d31c9" />
        <g fontSize="13">
          <text x="883" y="294" fill="#2e9a36">YM</text>
          <text x="883" y="342" fill="#2e9a36">YC</text>
          <text x="921" y="395" fill="#d53a3a">XC</text>
          <text x="967" y="395" fill="#d53a3a">XM</text>
          <text x="880" y="399" fontSize="11" fill="#1040ff">ZM</text>
        </g>
        <rect x="452" y="626" width="19.500" height="19.500" fill="#aeb1b0" />
        <path d="M452.500 643V620" stroke="#2c9b33" strokeWidth="2" />
        <path d="M452.500 614l-2.500 10h5z" fill="#2c9b33" />
        <path d="M454 645h22" stroke="#c83a3a" />
        <path d="M484 645l-10-3v6z" fill="#dc2a2a" />
        <circle cx="452" cy="645" r="4.500" fill="#dfe4f4" />
        <path d="M450 642h4v6h-4z" fill="#1646f0" />
        <text x="448" y="613" fontSize="12" fill="#2c9b33">Y</text>
        <text x="484" y="649" fontSize="12" fill="#d83030">X</text>
      </svg>
    </main>
  );
}

/* ---------- operation dialog ---------- */

const IconButton = ({ children, label, off }: Kids & { label: string; off?: boolean }) => (
  <button
    aria-label={label}
    disabled={off}
    className={
      off
        ? "flex h-[30px] w-[30px] shrink-0 items-center justify-center rounded-[3px] border-2 border-[#c4c4c4] bg-[#e6e6e6]"
        : "flex h-[30px] w-[30px] shrink-0 items-center justify-center rounded-[3px] border-2 border-[#7d7d7d] bg-linear-to-b from-[#ececec] via-[#d4d4d4] to-[#f0f0f0]"
    }
  >
    {children}
  </button>
);

function Combo({ id, value, w, label }: { id: string; value: string; w: string; label?: string }) {
  return (
    <span className={`relative flex h-6 shrink-0 ${w}`}>
      <select id={id} aria-label={label} className="h-full w-full appearance-none overflow-hidden rounded-[3px] border-2 border-[#7d7d7d] bg-white pr-4 pl-[3px] whitespace-nowrap">
        <option>{value}</option>
      </select>
      <span aria-hidden="true" className="pointer-events-none absolute top-px right-px bottom-px flex w-[17px] items-center justify-center rounded-r-[2px] border border-[#3a74b8] bg-linear-to-b from-[#4a8edc] via-[#b3d6f8] to-[#5a9fe6]">
        <svg width="11" height="7" viewBox="0 0 11 7">
          <path d="M0 0h11L5.500 7z" fill="#111" />
        </svg>
      </span>
    </span>
  );
}

const NumField = ({ id, value, wide }: { id: string; value: string; wide?: boolean }) => (
  <input
    id={id}
    defaultValue={value}
    className={`h-[22px] w-20 shrink-0 rounded-[3px] border-2 border-[#7d7d7d] bg-white pr-px font-['Liberation_Mono',monospace] text-[14px] ${wide ? "pl-[11px]" : "pl-[19px]"}`}
  />
);

const labelPad = { top: "leading-6", low: "pt-[5px]", mid: "pt-[2px]" };

const Row = ({ label, id, h, at = "mid", children }: Kids & { label: string; id?: string; h: string; at?: "top" | "low" | "mid" }) => (
  <div className={`flex shrink-0 gap-1 ${at === "top" ? "items-start pt-[2px]" : "items-center"} ${h}`}>
    <label htmlFor={id} className={`mr-auto whitespace-nowrap ${labelPad[at]}`}>
      {label}
    </label>
    {children}
  </div>
);

function OperationDialog() {
  return (
    <section role="dialog" aria-label="深度轮廓铣" className="absolute inset-y-0 left-[58px] flex w-[345px] flex-col rounded-t-[5px] border-x border-[#555] border-r-[#777] bg-[#ebebeb]">
      <header className="flex h-[22px] shrink-0 items-center rounded-t-[5px] border-t border-b border-t-[#666] border-b-black bg-linear-to-b from-[#444] to-[#151515] text-[12px] text-[#f2f2f2]">
        <span className="flex h-full w-5 items-center justify-center border-r border-[#aaa]">
          <Gear s={13} />
        </span>
        <h1 className="ml-[6px] whitespace-nowrap">深度轮廓铣 - [ZLEVEL_PROFILE_1]</h1>
        <button aria-label="关闭对话框" className="ml-auto flex h-full w-5 items-center justify-center border-l border-[#aaa]">
          <svg width="12" height="12" viewBox="0 0 12 12" stroke="#fff" strokeWidth="3">
            <path d="M1 1l10 10M11 1L1 11" />
          </svg>
        </button>
      </header>
      <div className="flex min-h-0 flex-1">
        <div className="flex min-h-0 flex-1 flex-col overflow-hidden pt-[7px] pr-[5px] pl-[9px]">
          <Row label="几何体" id="geom" h="h-[34px]" at="top">
            <Combo id="geom" value="MCS_MILL" w="w-[116px]" />
            <IconButton label="新建几何体">
              <NewGeometry />
            </IconButton>
            <IconButton label="编辑几何体">
              <Ico>
                <WrenchShape />
              </Ico>
            </IconButton>
          </Row>
          <Row label="指定部件" h="h-[34px]" at="low">
            <IconButton label="选择部件">
              <PartIcon />
            </IconButton>
            <IconButton label="显示部件">
              <Torch />
            </IconButton>
          </Row>
          <Row label="指定检查" h="h-[34px]" at="low">
            <IconButton label="选择检查">
              <CheckIcon />
            </IconButton>
            <IconButton label="显示检查" off>
              <Torch off />
            </IconButton>
          </Row>
          <Row label="指定切削区域" h="h-[34px]" at="low">
            <IconButton label="选择切削区域">
              <AreaIcon />
            </IconButton>
            <IconButton label="显示切削区域" off>
              <Torch off />
            </IconButton>
          </Row>
          <Row label="指定修剪边界" h="h-[34px]" at="low">
            <IconButton label="选择修剪边界">
              <TrimIcon />
            </IconButton>
            <IconButton label="显示修剪边界">
              <Torch />
            </IconButton>
          </Row>
          <Row label="刀具" id="tool" h="h-[34px]" at="top">
            <Combo id="tool" value="D6 (铣刀-5 参数)" w="w-[116px]" />
            <IconButton label="新建刀具">
              <NewTool />
            </IconButton>
            <IconButton label="编辑刀具">
              <ToolEdit />
            </IconButton>
          </Row>
          <button className="flex h-[22px] shrink-0 items-center border-b border-[#999] bg-linear-to-b from-[#fafafa] to-[#d2d2d2] pl-[7px] text-[#00004c]">
            刀轴
            <span className="ml-auto flex h-full w-[23px] items-center justify-center border-x border-[#aaa]">
              <svg width="11" height="9" viewBox="0 0 11 9" fill="none" stroke="#555" strokeWidth="2.500">
                <path d="M1 1l4.500 6L10 1" />
              </svg>
            </span>
          </button>
          <Row label="参考刀具" id="ref" h="h-[35px]" at="top">
            <Combo id="ref" value="NONE" w="w-[116px]" />
            <IconButton label="新建参考刀具">
              <NewTool />
            </IconButton>
            <IconButton label="编辑参考刀具" off>
              <ToolEdit off />
            </IconButton>
          </Row>
          <Row label="陡峭空间范围" id="steep" h="h-[26px]">
            <Combo id="steep" value="仅陡峭的" w="w-[140px]" />
          </Row>
          <Row label="角度" id="angle" h="h-[26px]">
            <NumField id="angle" value="65.00000" wide />
          </Row>
          <Row label="合并距离" id="merge" h="h-[26px]">
            <NumField id="merge" value="3.00000" />
            <Combo id="mergeUnit" label="合并距离单位" value="mm" w="w-[61px]" />
          </Row>
          <Row label="最小切削长度" id="minlen" h="h-[27px]">
            <NumField id="minlen" value="1.00000" />
            <Combo id="minlenUnit" label="最小切削长度单位" value="mm" w="w-[61px]" />
          </Row>
          <Row label="公共每刀切削深度" id="depth" h="h-[27px]">
            <Combo id="depth" value="恒定" w="w-[140px]" />
          </Row>
          <Row label="最大距离" id="maxd" h="h-[27px]">
            <NumField id="maxd" value="1.00000" />
            <Combo id="maxdUnit" label="最大距离单位" value="mm" w="w-[61px]" />
          </Row>
          <Row label="切削方向" id="dir" h="h-[27px]">
            <Combo id="dir" value="顺铣" w="w-[140px]" />
          </Row>
          <Row label="层到层" id="l2l" h="h-[27px]">
            <Combo id="l2l" value="沿部件斜进刀" w="w-[140px]" />
          </Row>
          <label className="flex h-[24px] shrink-0 items-center gap-[2px]">
            <input type="checkbox" className="h-4 w-4 appearance-none rounded-[3px] border-2 border-[#7d7d7d] bg-linear-to-b from-[#d4d4d4] to-[#f4f4f4]" />
            使底面余量与侧面余量一致
          </label>
          <Row label="部件侧面余量" id="side" h="h-[26px]">
            <NumField id="side" value="0.00000" />
            <button aria-label="锁定" className="flex h-[22px] w-[22px] shrink-0 items-center justify-center rounded-[3px] border-2 border-[#7d7d7d] bg-[#ddd]">
              <Lock />
            </button>
          </Row>
          <Row label="部件底面余量" id="floor" h="h-[25px]">
            <NumField id="floor" value="0.00000" />
          </Row>
          <Row label="切削层" h="h-[34px]">
            <IconButton label="编辑切削层">
              <LayersIcon />
            </IconButton>
          </Row>
          <Row label="切削参数" h="h-[34px]">
            <IconButton label="编辑切削参数">
              <CutParam />
            </IconButton>
          </Row>
          <Row label="非切削移动" h="h-[34px]">
            <IconButton label="编辑非切削移动">
              <NonCut />
            </IconButton>
          </Row>
        </div>
        <div aria-hidden="true" className="mt-1 mr-[6px] flex w-4 flex-col items-center bg-[#f2f2f2]">
          <svg width="9" height="17" viewBox="0 0 9 17" fill="none" stroke="#444" strokeWidth="1.800">
            <path d="M1 11l3.500-4L8 11" />
          </svg>
          <span className="h-[475px] w-[15px] bg-[#a3a3a3]" />
          <svg width="9" height="17" viewBox="0 0 9 17" fill="none" stroke="#444" strokeWidth="1.800" className="mt-auto">
            <path d="M1 6l3.500 4L8 6" />
          </svg>
        </div>
      </div>
      <footer className="mx-[6px] flex h-[36px] shrink-0 justify-end gap-[6px] border-t-2 border-[#b9b9b9] pt-1 pr-[10px]">
        <button className="h-6 w-[53px] rounded-[3px] border-2 border-[#2f6a2f] bg-linear-to-b from-[#e6f3e0] via-[#7cc765] to-[#a8ec8c]">确定</button>
        <button className="h-6 w-[53px] rounded-[3px] border-2 border-[#7d7d7d] bg-linear-to-b from-[#fafafa] via-[#dcdcdc] to-[#efefef]">取消</button>
      </footer>
      <div className="h-2 shrink-0 rounded-b-[4px] bg-[#161616]" />
    </section>
  );
}

/* ---------- overlays ---------- */

function Watermark() {
  return (
    <div className="pointer-events-none absolute right-6 bottom-[12px] flex items-start gap-[7px]">
      <svg width="73" height="84" viewBox="0 0 74 84" stroke="#4d5256" strokeWidth="1" aria-hidden="true">
        <path d="M13 14L36 1l20 12 1 15c-8-9-24-15-44-14z" fill="#8a9faa" />
        <path d="M53 10l19 11v40l-12-1c2-20 0-36-7-50z" fill="#3c86ac" />
        <path d="M56 32v28L38 67c10 4 22 4 34-4V21z" fill="#2f7ca6" />
        <path d="M1 21c14-8 32-8 48 2l-12-3-19 12C8 41 2 52 1 62z" fill="#6798b0" />
        <path d="M18 32C6 44 1 54 1 62l16 9V58z" fill="#4d8fb3" />
        <path d="M17 54c2 14 9 22 19 29L1 62zM17 54l19 12c12 4 24 3 36-4L36 83C24 77 18 66 17 54z" fill="#69c2ec" />
        <path d="M21 34l16-10 16 10-16 8z" fill="#6a9db9" />
        <path d="M21 34l16 8v19l-16-9z" fill="#5295bb" />
        <path d="M53 34l-16 8v19l16-9z" fill="#2679a5" />
      </svg>
      <div className="pt-[11px] text-[#a6a8ab]">
        <div className="font-['Liberation_Sans','Noto_Sans_CJK_SC',sans-serif] text-[42px] leading-[46px] font-bold whitespace-nowrap">3D世界网</div>
        <div className="font-['DejaVu_Sans',sans-serif] text-[17px] leading-[12px] whitespace-nowrap text-[#c4c5c6]">WWW.3DSJW.COM</div>
      </div>
    </div>
  );
}

function ImeBar() {
  const b = "#1f78c8";
  return (
    <div className="absolute right-0 bottom-[4px] flex h-6 w-[206px] items-center justify-between border-y border-[#b9cfe6] bg-[#fbfdff] pr-1 text-[#1f78c8]">
      <svg width="28" height="28" viewBox="0 0 28 28" className="-ml-[2px] shrink-0" fill="none">
        <path d="M1 4l22-3 4 22-22 4z" fill="#ee4a1c" stroke="#ee4a1c" strokeWidth="2" strokeLinejoin="round" />
        <path d="M21 7c-5-2-14-1-13 3s13 1 13 6-10 5-15 3" stroke="#fff" strokeWidth="3.500" />
      </svg>
      <span className="text-[15px] leading-4 font-bold">中</span>
      <Ico s={16}>
        <circle cx="6" cy="7" r="3" stroke={b} strokeWidth="2" />
        <path d="M17 12h4c1 4-1 7-4 9 1-3 1-4 0-9z" fill={b} stroke={b} />
      </Ico>
      <Ico s={16}>
        <circle cx="12" cy="12" r="10.500" stroke={b} strokeWidth="2.500" />
        <path d="M7 14c2 5 8 5 10 0" stroke={b} strokeWidth="2" />
        <path d="M8.500 6.500v4M15.500 6.500v4" stroke={b} strokeWidth="2.500" />
      </Ico>
      <Ico s={16}>
        <rect x="8" y="1" width="8" height="13" rx="4" fill={b} />
        <path d="M4 10c0 11 16 11 16 0M12 18v5M7 23h10" stroke={b} strokeWidth="2.500" />
      </Ico>
      <Ico s={16}>
        <rect x="1" y="4" width="22" height="16" rx="2" stroke={b} strokeWidth="2.500" />
        <path d="M4 9h16M4 13h16" stroke={b} strokeWidth="2" strokeDasharray="2 2" />
        <path d="M7 17h10" stroke={b} strokeWidth="2" />
      </Ico>
      <Ico s={16}>
        <circle cx="11" cy="6" r="5" fill="#b3bdcb" />
        <path d="M1 22c0-12 18-12 19 0z" fill="#b3bdcb" />
        <rect x="12" y="13" width="11" height="10" fill="#fff" stroke="#b3bdcb" strokeWidth="2" />
        <path d="M20 16h-5v2h5v2h-5" stroke="#b3bdcb" />
      </Ico>
      <Ico s={16}>
        <path d="M7 2c2 3 8 3 10 0l7 4-3 6-3-1v12H6V11l-3 1-3-6z" fill={b} />
      </Ico>
      <Ico s={16}>
        <path d="M2 22c-2-2-1-4 1-5l8-7c-1-5 3-9 8-8l-4 4 1 3 3 1 4-4c1 5-3 9-8 8l-7 8c-2 2-4 2-6 0z" fill={b} />
      </Ico>
    </div>
  );
}

export default function App() {
  return (
    <div className="relative flex h-screen min-h-[728px] flex-col overflow-hidden bg-[#d9d9d9] font-['Noto_Sans','Noto_Sans_CJK_SC',sans-serif] text-[12px] leading-4 text-black">
      <TitleBar />
      <MenuBar />
      <StandardBar />
      <CamBar />
      <SelectionBar />
      <PromptBar />
      <div className="flex min-h-0 flex-1">
        <ResourceBar />
        <Navigator />
        <Viewport />
      </div>
      <footer className="flex h-[34px] shrink-0 items-center bg-linear-to-b from-[#e4e4e4] to-[#cecece]">
        <Grip />
        <Tool label="装配" w="w-[30px]">
          <Ico>
            <path d="M2 2h20v20H2z" fill="#a2a6b3" stroke="#7b8090" strokeWidth="2" />
            <path d="M6 6h7v6H6zM5 13h7v6H5zM13 13h6v6h-6z" fill="#bbb193" stroke="#8a8268" />
          </Ico>
        </Tool>
        <Tool label="组件" w="w-[26px]">
          <Ico>
            <path d="M5 1h8v7H5zM4 14h8v8H4zM13 13h8v7h-8zM5 8h7v6H5z" fill="#b5ad96" stroke="#8a8268" />
          </Ico>
        </Tool>
      </footer>
      <OperationDialog />
      <Watermark />
      <ImeBar />
    </div>
  );
}
